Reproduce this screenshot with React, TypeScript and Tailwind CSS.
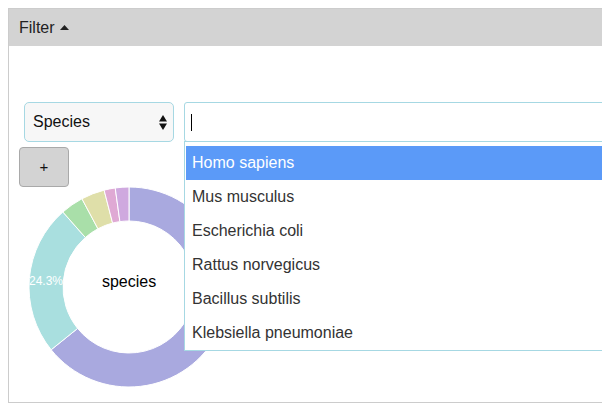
import React from "react";

const segments = [
  { v: 0.642, c: "#a9a9df" },
  { v: 0.243, c: "#a9dfdf" },
  { v: 0.037, c: "#a9dfa9" },
  { v: 0.038, c: "#dfdfa9" },
  { v: 0.018, c: "#dfa9d4" },
  { v: 0.022, c: "#cfa9df" },
];

function arcPath(cx: number, cy: number, r0: number, r1: number, a0: number, a1: number) {
  const p = (r: number, a: number) => [cx + r * Math.sin(a), cy - r * Math.cos(a)];
  const large = a1 - a0 > Math.PI ? 1 : 0;
  const [x0, y0] = p(r1, a0);
  const [x1, y1] = p(r1, a1);
  const [x2, y2] = p(r0, a1);
  const [x3, y3] = p(r0, a0);
  return `M${x0},${y0} A${r1},${r1} 0 ${large} 1 ${x1},${y1} L${x2},${y2} A${r0},${r0} 0 ${large} 0 ${x3},${y3} Z`;
}

function Donut() {
  const cx = 110;
  const cy = 100;
  let acc = 0;
  const paths = segments.map((s, i) => {
    const a0 = acc * Math.PI * 2;
    acc += s.v;
    const a1 = acc * Math.PI * 2;
    return <path key={i} d={arcPath(cx, cy, 66, 100, a0, a1)} fill={s.c} stroke="#ffffff" strokeWidth={1} />;
  });
  return (
    <svg width={220} height={205} className="block" style={{ fontFamily: '"Liberation Sans", Arial, sans-serif' }}>
      {paths}
      <text x={cx} y={cy} textAnchor="middle" fontSize={16} fill="#000">
        species
      </text>
      <text x={27} y={98} textAnchor="middle" fontSize={12} fill="#ffffff">
        24.3%
      </text>
    </svg>
  );
}

const items = [
  "Homo sapiens",
  "Mus musculus",
  "Escherichia coli",
  "Rattus norvegicus",
  "Bacillus subtilis",
  "Klebsiella pneumoniae",
];

export default function App() {
  return (
    <div
      className="w-[602px] h-[416px] overflow-hidden bg-white p-2"
      style={{ fontFamily: '"Liberation Sans", Arial, Helvetica, sans-serif' }}
    >
      <div className="w-[660px] h-[395px] border border-[#cccccc] bg-white">
        <div className="h-[37px] bg-[#d3d3d3] flex items-center px-[10px] text-[16px] text-[#222]">
          <span>Filter</span>
          <svg width="9" height="5" viewBox="0 0 9 5" className="ml-[5px] mt-[-1px]">
            <path d="M0 5 L4.5 0 L9 5 Z" fill="#222" />
          </svg>
        </div>
        <div className="pl-[10px] pt-[56px]">
          <div className="flex items-start gap-[10px] ml-[5px]">
            <div className="relative w-[150px] h-[40px] rounded-[5px] border border-[#a6d8e3] bg-[#f7f7f7] flex items-center pl-[8px] text-[16px] text-[#111]">
              Species
              <svg width="8" height="15" viewBox="0 0 8 15" className="absolute right-[6px] top-[12px]">
                <path d="M0 6.5 L4 0 L8 6.5 Z" fill="#111" />
                <path d="M0 8.5 L8 8.5 L4 15 Z" fill="#111" />
              </svg>
            </div>
            <div className="relative w-[460px]">
              <div className="h-[40px] rounded-[3px] border border-[#a6d8e3] bg-white flex items-center pl-[6px]">
                <span className="block w-[1px] h-[17px] bg-black" />
              </div>
              <div className="absolute left-0 top-[39px] w-full border border-[#a6d8e3] bg-white pt-[4px] px-[1px] z-10">
                {items.map((t, i) => (
                  <div
                    key={t}
                    className={
                      i === 0
                        ? "h-[34px] flex items-center pl-[6px] text-[16px] bg-[#5b9af8] text-white"
                        : "h-[34px] flex items-center pl-[6px] text-[16px] text-[#333]"
                    }
                  >
                    {t}
                  </div>
                ))}
              </div>
            </div>
          </div>
          <button className="mt-[5px] w-[50px] h-[40px] rounded-[4px] border border-[#a9a9a9] bg-[#d3d3d3] flex items-center justify-center text-[15px] text-[#111]">
            +
          </button>
          <Donut />
        </div>
      </div>
    </div>
  );
}
